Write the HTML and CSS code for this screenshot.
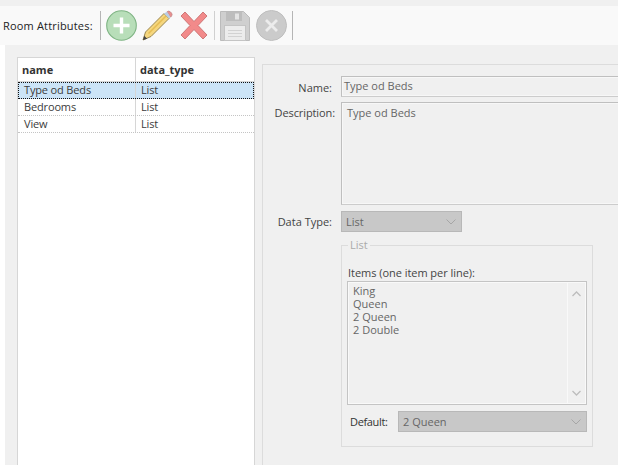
FILE: index.html
```html
<!DOCTYPE html>
<html lang="en">
<head>
<meta charset="utf-8">
<title>Room Attributes</title>
<link rel="stylesheet" href="styles.css">
</head>
<body>
<div class="app">
  <header class="toolbar">
    <span class="toolbar-title">Room Attributes:</span>
    <span class="sep"></span>
    <svg class="icon icon-add" width="31" height="31" viewBox="0 0 31 31"><circle cx="15.500" cy="15.500" r="14.800" fill="#b8deb9" stroke="#7fb484" stroke-width="1.100"/><path d="M15.500 7.500v16M7.500 15.500h16" stroke="#fff" stroke-width="3.400"/></svg>
    <svg class="icon icon-edit" width="31" height="31" viewBox="0 0 31 31"><path d="M1 30l2.500-8L22 3.500 27 8.500 9 26.500z" fill="#f5d67e" stroke="#8d7a45" stroke-width=".9"/><path d="M6.500 23.500L24 6" stroke="#e6bd52" stroke-width="1.600"/><path d="M25 1.800q1.800-1.400 3.300 0l1.200 1.200q1.300 1.600 0 3.200l-1 1z" fill="#e98f8f" stroke="#bd7f7f" stroke-width=".7"/><path d="M22 3.500l3-1.800 3.500 5.500L27 8.500z" fill="#b9cde4"/><path d="M1 30l1.200-4.200 3 3z" fill="#444"/></svg>
    <svg class="icon icon-delete" width="28" height="29" viewBox="0 0 28 29"><path d="M1 5L5 1l9 9.500L23 1l4 4-9 9.500 9 9.500-4 4-9-9.500L5 28l-4-4 9-9.500z" fill="#f28a8a" stroke="#c96f6f" stroke-width=".9"/></svg>
    <span class="sep sep-b"></span>
    <svg class="icon icon-save" width="30" height="30" viewBox="0 0 30 30"><path d="M.5.500h23l6 6v23H.5z" fill="#cfcfcf" stroke="#bbb"/><rect x="6" y="1" width="16" height="9" fill="#bdbdbd"/><rect x="15" y="2.500" width="4" height="6" fill="#e4e4e4"/><rect x="4.500" y="14.500" width="21" height="15" fill="#ececec" stroke="#c4c4c4"/><path d="M8 19.500h14M8 22.500h14M8 25.500h14" stroke="#d2d2d2"/></svg>
    <svg class="icon icon-close" width="31" height="31" viewBox="0 0 31 31"><circle cx="15.500" cy="15.500" r="15" fill="#cbcbcb" stroke="#bebebe"/><path d="M10 10l11 11M21 10L10 21" stroke="#ececec" stroke-width="2.800"/></svg>
    <span class="sep sep-c"></span>
  </header>
  <main class="content">
    <section class="table">
      <div class="row head">
        <div class="cell">name</div>
        <div class="cell cell-2">data_type</div>
      </div>
      <div class="row selected">
        <div class="cell">Type od Beds</div>
        <div class="cell cell-2">List</div>
      </div>
      <div class="row">
        <div class="cell">Bedrooms</div>
        <div class="cell cell-2">List</div>
      </div>
      <div class="row">
        <div class="cell">View</div>
        <div class="cell cell-2">List</div>
      </div>
    </section>
    <section class="panel">
      <div class="form-row name-row">
        <label class="label">Name:</label>
        <div class="field input">Type od Beds</div>
      </div>
      <div class="form-row desc-row">
        <label class="label">Description:</label>
        <div class="field textarea">Type od Beds</div>
      </div>
      <div class="form-row type-row">
        <label class="label">Data Type:</label>
        <div class="select type-select">List
          <svg class="chev" width="10" height="6" viewBox="0 0 10 6"><path d="M.5.500L5 5 9.500.500" fill="none" stroke="#a6a6a6"/></svg>
        </div>
      </div>
      <div class="group">
        <span class="legend">List</span>
        <div class="items-label">Items (one item per line):</div>
        <div class="items">
          <div class="items-text">
            <div>King</div>
            <div>Queen</div>
            <div>2 Queen</div>
            <div>2 Double</div>
          </div>
          <div class="scroll">
            <svg width="9" height="6" viewBox="0 0 9 6"><path d="M.5 5L4.500 1l4 4" fill="none" stroke="#bdbdbd" stroke-width="1.300"/></svg>
            <svg width="9" height="6" viewBox="0 0 9 6"><path d="M.5 1l4 4 4-4" fill="none" stroke="#bdbdbd" stroke-width="1.300"/></svg>
          </div>
        </div>
        <div class="default-row">
          <label class="default-label">Default:</label>
          <div class="select default-select">2 Queen
            <svg class="chev" width="10" height="6" viewBox="0 0 10 6"><path d="M.5.500L5 5 9.500.500" fill="none" stroke="#a6a6a6"/></svg>
          </div>
        </div>
      </div>
    </section>
  </main>
</div>
</body>
</html>
```
FILE: styles.css
```css
* { box-sizing: border-box; }
html, body { margin: 0; padding: 0; height: 100%; overflow: hidden; }
body { background: #f0f0f0; font-family: "Open Sans", "Noto Sans", sans-serif; font-size: 11px; color: #3c3c3c; }
.app { width: 618px; height: 465px; padding-top: 6px; display: flex; flex-direction: column; overflow: hidden; }
.toolbar { height: 39px; background: #f9f9f9; display: flex; align-items: center; padding-left: 3px; flex: none; }
.toolbar-title { color: #222; width: 97px; white-space: nowrap; letter-spacing: .18px; }
.sep { width: 1px; height: 29px; background: #b5b5b5; flex: none; }
.sep-b { background: #d0d0d0; margin-left: 6px; }
.sep-c { margin-left: 5px; }
.icon { flex: none; }
.icon-add { margin-left: 5px; }
.icon-edit { margin-left: 5px; }
.icon-delete { margin-left: 7px; }
.icon-save { margin-left: 5px; }
.icon-close { margin-left: 6px; }
.content { flex: 1; display: flex; align-items: stretch; border-left: 5px solid #fff; padding: 12px 0 0 12px; min-height: 0; }
.table { width: 238px; flex: none; background: #fff; border: 1px solid #d6d6d6; border-bottom: none; }
.row { display: flex; height: 17px; border-bottom: 1px dotted #c4c4c4; line-height: 15px; letter-spacing: -.15px; }
.cell { width: 118px; padding-left: 6px; border-right: 1px solid #d6d6d6; white-space: nowrap; flex: none; }
.cell-2 { width: auto; border-right: none; padding-left: 5px; flex: 1; }
.head { height: 24px; border-bottom: 1px solid #d6d6d6; font-weight: 700; color: #333; line-height: 23px; letter-spacing: 0; }
.head .cell { padding-left: 4px; }
.selected { background: #cce4f7; outline: 1px dotted #111; outline-offset: -1px; }
.panel { flex: none; width: 400px; margin: 7px 0 0 7px; border: 1px solid #dcdcdc; border-right: none; border-bottom: none; padding-top: 11px; }
.form-row { display: flex; }
.label { width: 72px; text-align: right; flex: none; color: #444; margin-left: 6px; white-space: nowrap; }
.name-row { height: 21px; line-height: 23px; }
.name-row .label { padding-right: 9px; }
.desc-row { margin-top: 5px; height: 103px; line-height: 22px; }
.desc-row .label { padding-right: 6px; letter-spacing: -.1px; }
.type-row { margin-top: 6px; height: 21px; line-height: 21px; }
.type-row .label { padding-right: 9px; }
.field { flex: none; width: 300px; border: 1px solid #bfbfbf; border-bottom-color: #ccc; color: #666; box-shadow: inset 0 0 0 1px #f7f7f7; }
.input { padding-left: 2px; line-height: 18px; }
.textarea { padding-left: 5px; line-height: 17px; padding-top: 1px; }
.select { position: relative; background: #c8c8c8; border: 1px solid #b8b8b8; color: #666; padding-left: 4px; height: 21px; line-height: 19px; flex: none; }
.type-select { width: 121px; }
.chev { position: absolute; right: 5px; top: 7px; }
.group { position: relative; width: 252px; height: 202px; margin: 13px 0 0 78px; border: 1px solid #dcdcdc; padding: 20px 5px 0; }
.legend { position: absolute; left: 6px; top: -9px; padding: 0 2px; background: #f0f0f0; color: #aaa; line-height: 15px; }
.items-label { line-height: 14px; color: #444; padding-left: 1px; letter-spacing: -.04px; margin-bottom: 1px; }
.items { display: flex; height: 124px; border: 1px solid #c4c4c4; box-shadow: inset 0 0 0 1px #f9f9f9; }
.items-text { flex: 1; padding: 2px 0 0 5px; line-height: 13px; color: #666; }
.scroll { width: 18px; margin: 1px; background: #f0f0f0; border-left: 1px solid #f9f9f9; display: flex; flex-direction: column; justify-content: space-between; align-items: center; padding: 8px 0 7px; }
.default-row { display: flex; align-items: center; margin-top: 6px; }
.default-label { width: 51px; padding-left: 3px; color: #333; flex: none; letter-spacing: -.35px; }
.default-select { flex: 1; }
```
